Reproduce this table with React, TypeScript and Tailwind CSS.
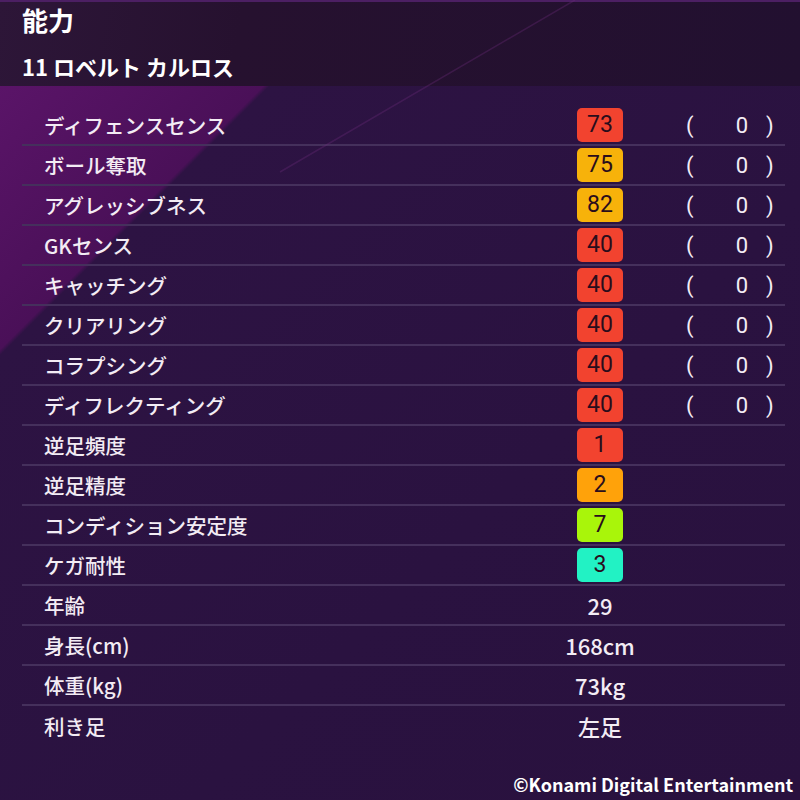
import React from 'react';

type Row = {
    label: string
    score?: number
    color?: string
    bonus?: boolean
    text?: string
}

const jp = "font-['Noto_Sans_CJK_JP','Noto_Sans',sans-serif]"
const num = "font-['Roboto','Noto_Sans',sans-serif]"

const rows: Row[] = [
    {label: 'ディフェンスセンス', score: 73, color: 'bg-[#f2432f]', bonus: true},
    {label: 'ボール奪取', score: 75, color: 'bg-[#f7b20a]', bonus: true},
    {label: 'アグレッシブネス', score: 82, color: 'bg-[#f7b20a]', bonus: true},
    {label: 'GKセンス', score: 40, color: 'bg-[#f2432f]', bonus: true},
    {label: 'キャッチング', score: 40, color: 'bg-[#f2432f]', bonus: true},
    {label: 'クリアリング', score: 40, color: 'bg-[#f2432f]', bonus: true},
    {label: 'コラプシング', score: 40, color: 'bg-[#f2432f]', bonus: true},
    {label: 'ディフレクティング', score: 40, color: 'bg-[#f2432f]', bonus: true},
    {label: '逆足頻度', score: 1, color: 'bg-[#f2432f]'},
    {label: '逆足精度', score: 2, color: 'bg-[#ffa20a]'},
    {label: 'コンディション安定度', score: 7, color: 'bg-[#a9f50a]'},
    {label: 'ケガ耐性', score: 3, color: 'bg-[#22f2c4]'},
    {label: '年齢', text: '29'},
    {label: '身長(cm)', text: '168cm'},
    {label: '体重(kg)', text: '73kg'},
    {label: '利き足', text: '左足'},
]

const StatRow = ({row, last}: {row: Row, last: boolean}) => (
    <div className={`flex items-center h-10 ${last ? '' : 'border-b-2 border-[#45305c]'}`}>
        <div className={`w-[555px] pl-[22px] text-[20.5px] font-medium text-[#f3ecf4] ${jp}`}>{row.label}</div>
        <div className="w-[46px] flex justify-center whitespace-nowrap">
            {row.score !== undefined ? (
                <div className={`w-[46px] h-[34px] rounded-[5px] ${row.color} flex items-center justify-center text-[23px] text-[#2a0d1c] ${num}`}>
                    {row.score}
                </div>
            ) : (
                <span className={`text-[22px] font-medium text-[#f3ecf4] ${jp}`}>{row.text}</span>
            )}
        </div>
        {row.bonus && (
            <div className={`flex items-center text-[22px] text-[#f3ecf4] ${num}`}>
                <span className="ml-[63px] w-[10px]">(</span>
                <span className="w-[52px] text-right">0</span>
                <span className="ml-[18px]">)</span>
            </div>
        )}
    </div>
)

export default function App() {
    return (
        <div className="w-[800px] h-[800px] flex flex-col bg-[#2a1240] overflow-hidden relative">
            {/* header */}
            <div className="h-[86px] px-[22px] pt-[5px] text-white font-bold border-t-2 border-[#4c1f63] bg-[linear-gradient(100deg,#2d1638_0%,#26112f_30%,#221030_100%)]">
                <div className={`leading-[26px] text-[26px] ${jp}`}>能力</div>
                <div className={`mt-[21px] leading-[24px] text-[22px] ${jp}`}>11 ロベルト カルロス</div>
            </div>

            {/* body */}
            <div className="flex-1 flex flex-col bg-[linear-gradient(135deg,#5a1468_0%,#4a1058_17.4%,#2d1343_17.8%,#2a1240_60%,#29113e_100%)]">
                <div className="mt-5 ml-[22px] w-[763px] flex flex-col">
                    {rows.map((row, i) => (
                        <StatRow key={i} row={row} last={i === rows.length - 1}/>
                    ))}
                </div>
                <div className="flex-1 flex items-end justify-end pr-[7px] pb-[2px]">
                    <span className={`text-[18px] font-bold text-white ${jp}`}>©Konami Digital Entertainment</span>
                </div>
            </div>

            {/* faint streak across header */}
            <svg className="absolute left-0 top-0 pointer-events-none" width="800" height="200">
                <line x1="575" y1="0" x2="280" y2="172" stroke="#6a2a78" strokeOpacity="0.35" strokeWidth="1.5"/>
            </svg>
        </div>
    );
}
